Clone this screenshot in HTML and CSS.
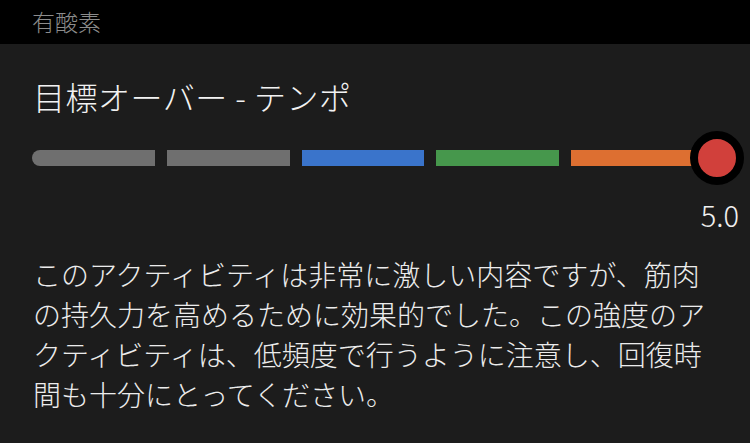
FILE: index.html
```html
<!DOCTYPE html>
<html lang="ja">
<head>
<meta charset="utf-8">
<link rel="stylesheet" href="styles.css">
</head>
<body>
<div class="topbar">有酸素</div>
<div class="panel">
  <div class="title">目標オーバー - テンポ</div>
  <div class="scale">
    <div class="segments">
      <div class="seg seg-gray first"></div>
      <div class="seg seg-gray"></div>
      <div class="seg seg-blue"></div>
      <div class="seg seg-green"></div>
      <div class="seg seg-orange"></div>
    </div>
    <div class="knob"></div>
  </div>
  <div class="value">5.0</div>
  <p class="desc">このアクティビティは非常に激しい内容ですが、筋肉の持久力を高めるために効果的でした。この強度のアクティビティは、低頻度で行うように注意し、回復時間も十分にとってください。</p>
</div>
</body>
</html>
```

FILE: styles.css
```css
html, body {
  margin: 0;
  padding: 0;
  background: #1c1c1c;
  width: 750px;
  height: 443px;
  overflow: hidden;
  font-family: "Noto Sans CJK JP", "Noto Sans", sans-serif;
  font-weight: 300;
}
.topbar {
  height: 44px;
  background: #000;
  color: #8c8c8c;
  font-size: 23px;
  line-height: 42px;
  padding-left: 32px;
}
.panel {
  background: #1c1c1c;
  padding: 0 35px 0 35px;
}
.title {
  color: #f2f2f2;
  font-size: 32px;
  line-height: 40px;
  padding-top: 32px;
  margin-left: -2px;
  letter-spacing: 0.5px;
}
.scale {
  position: relative;
  margin-top: 34px;
  margin-left: -3px;
  height: 16px;
}
.segments {
  display: flex;
  gap: 12px;
  width: 662px;
  height: 16px;
}
.seg {
  flex: 1;
  height: 16px;
}
.seg.first {
  border-radius: 8px 0 0 8px;
}
.seg-gray { background: #6f6f6f; }
.seg-blue { background: #3a74cb; }
.seg-green { background: #46974c; }
.seg-orange { background: #dd6f31; }
.knob {
  position: absolute;
  left: 658px;
  top: -19px;
  width: 38px;
  height: 38px;
  border-radius: 50%;
  background: #d1403b;
  border: 8px solid #000;
}
.value {
  color: #f0f0f0;
  font-size: 29px;
  line-height: 32px;
  text-align: right;
  margin-top: 32px;
  margin-right: -24px;
}
.desc {
  margin: 24px 0 0 -2px;
  width: 680px;
  color: #ececec;
  font-size: 28px;
  line-height: 40px;
}
```
